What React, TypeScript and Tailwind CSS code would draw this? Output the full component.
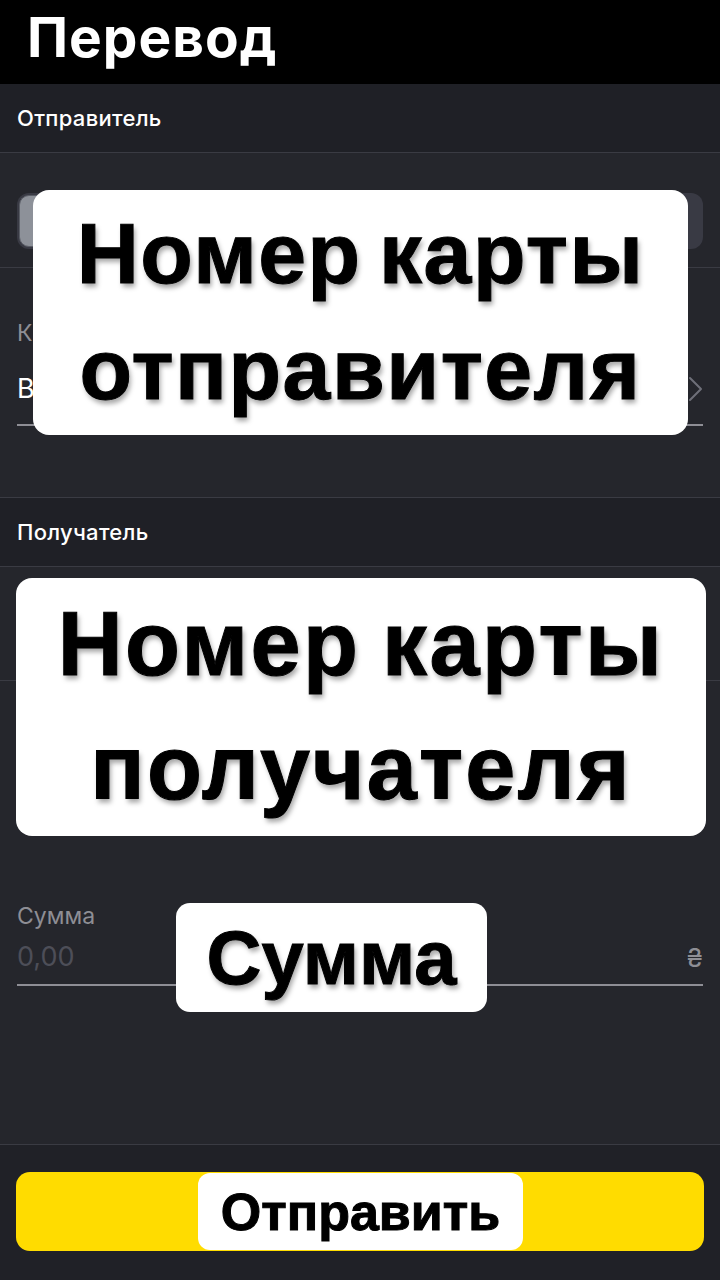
import React from 'react';

const sans = "font-['Inter','Noto_Sans',sans-serif]";
const shout = "font-['Liberation_Sans','Arial',sans-serif] font-bold text-black [-webkit-text-stroke:1px_black] [text-shadow:2px_4px_5px_rgba(0,0,0,0.35)]";

function SectionTitle({ title }: { title: string }) {
    return (
        <div className="h-[69px] bg-[#1f2026] border-b border-[#3a3b43] flex items-center px-[17px]">
            <span className="text-[22px] font-medium text-white tracking-[0.3px]">{title}</span>
        </div>
    );
}

function Chevron() {
    return (
        <svg width="16" height="26" viewBox="0 0 16 26" fill="none">
            <path d="M2 2 L13 13 L2 24" stroke="#6e6f78" strokeWidth="2" strokeLinecap="round" strokeLinejoin="round" />
        </svg>
    );
}

export default function App() {
    return (
        <div className={`relative w-[720px] h-[1280px] bg-[#25262c] flex flex-col overflow-hidden ${sans}`}>
            <div className="h-[84px] bg-black flex items-start px-[27px] pt-[1px] shrink-0">
                <h1 className="text-[55px] font-bold text-white leading-[72px] tracking-[1px]">Перевод</h1>
            </div>

            <SectionTitle title="Отправитель" />

            <div className="h-[115px] border-b border-[#3a3b43] px-[17px] pt-[40px]">
                <div className="h-[56px] rounded-[12px] bg-[#393a44] flex p-[2px]">
                    <div className="w-1/2 rounded-[10px] bg-[#8d9199] border border-[#5a5d66]" />
                    <div className="w-1/2" />
                </div>
            </div>

            <div className="h-[230px] border-b border-[#3a3b43] px-[17px] pt-[50px]">
                <div className="text-[23px] text-[#8e8e95] leading-[30px]">Карта</div>
                <div className="mt-[22px] flex items-center justify-between h-[38px]">
                    <span className="text-[27px] text-white">Выберите</span>
                    <span className="pr-[1px] -mr-[2px]"><Chevron /></span>
                </div>
                <div className="mt-[16px] h-[2px] bg-[#8e8e95]" />
            </div>

            <SectionTitle title="Получатель" />

            <div className="h-[114px] border-b border-[#3a3b43]" />

            <div className="flex-1 px-[17px] pt-[220px]">
                <div className="text-[23px] text-[#8e8e95] leading-[30px]">Сумма</div>
                <div className="mt-[8px] flex items-center justify-between h-[36px]">
                    <span className="text-[27px] text-[#4d4e58]">0,00</span>
                    <span className="text-[26px] text-[#8e8e95]">₴</span>
                </div>
                <div className="mt-[9px] h-[2px] bg-[#8e8e95]" />
            </div>

            <div className="h-[136px] bg-[#202127] border-t border-[#3a3b43] px-[16px] pt-[27px] shrink-0">
                <div className="h-[79px] rounded-[14px] bg-[#ffdc00]" />
            </div>

            {/* white caption overlays */}
            <div className="absolute left-[33px] top-[190px] w-[655px] h-[245px] bg-white rounded-[16px] flex flex-col items-center justify-center pb-[4px]">
                <div className={`${shout} text-[86px] leading-[116px] tracking-[1.5px] [word-spacing:-8px]`}>Номер карты</div>
                <div className={`${shout} text-[86px] leading-[116px] tracking-[1.5px]`}>отправителя</div>
            </div>

            <div className="absolute left-[16px] top-[578px] w-[690px] h-[258px] bg-white rounded-[16px] flex flex-col items-center justify-center pb-[2px]">
                <div className={`${shout} text-[90px] leading-[124px] tracking-[2.5px] [word-spacing:-6px]`}>Номер карты</div>
                <div className={`${shout} text-[90px] leading-[124px] tracking-[2.2px]`}>получателя</div>
            </div>

            <div className="absolute left-[176px] top-[903px] w-[311px] h-[109px] bg-white rounded-[14px] flex items-center justify-center">
                <div className={`${shout} text-[76px] leading-[100px]`}>Сумма</div>
            </div>

            <div className="absolute left-[198px] top-[1173px] w-[325px] h-[77px] bg-white rounded-[12px] flex items-center justify-center">
                <div className={`${shout} text-[52px] leading-[70px] [text-shadow:none]`}>Отправить</div>
            </div>
        </div>
    );
}
